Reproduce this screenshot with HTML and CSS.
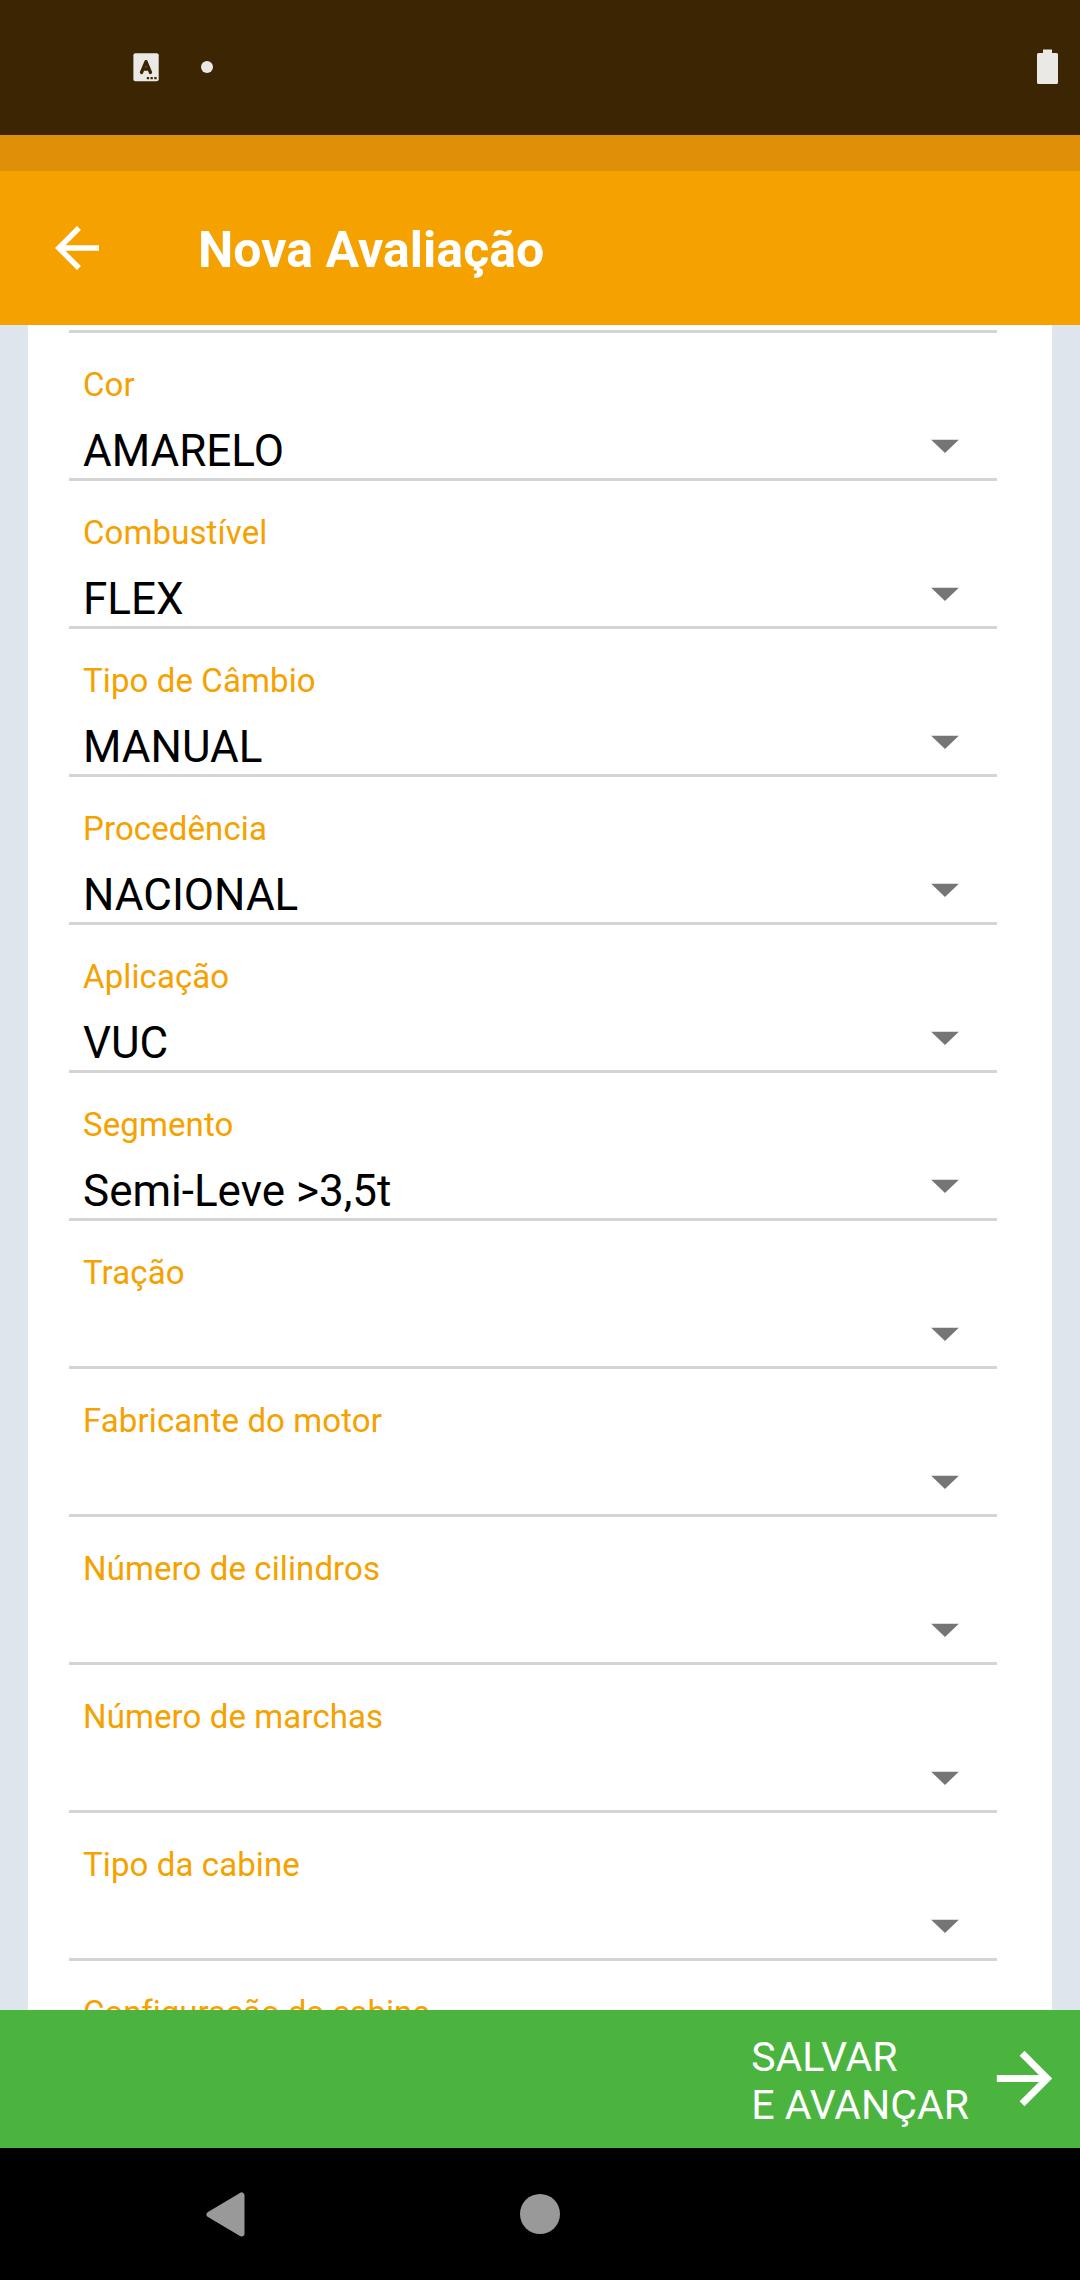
FILE: index.html
```html
<!DOCTYPE html>
<html lang="pt-BR">
<head>
<meta charset="utf-8">
<title>Nova Avaliação</title>
<link rel="stylesheet" href="styles.css">
</head>
<body>
<div class="screen">
  <div class="status">
    <svg class="status-app" viewBox="0 0 26 29"><rect x=".4" y=".3" width="25.3" height="28" rx="2" fill="#ebe9e5"/><path d="M8.500 19.500 13 8.600l4.500 10.900M10 16h6" fill="none" stroke="#3b2503" stroke-width="3.300" stroke-linecap="round" stroke-linejoin="round"/><path d="M13.800 24h2.300v2.200h-2.300zM17.500 24h2.300v2.200h-2.300zM21.300 24h2.300v2.200h-2.300z" fill="#3b2503"/></svg>
    <span class="status-dot"></span>
    <svg class="status-battery" viewBox="0 0 21 36"><path d="M6 .5h9V4h4.500Q21 4 21 5.500v28Q21 35 19.500 35h-18Q0 35 0 33.500v-28Q0 4 1.500 4H6z" fill="#ebe9e5"/></svg>
  </div>
  <div class="band"></div>
  <header class="toolbar">
    <svg class="back" viewBox="0 0 24 24"><path d="M20 11H7.830l5.590-5.590L12 4l-8 8 8 8 1.410-1.410L7.830 13H20z" fill="#fff"/></svg>
    <h1 class="title">Nova Avaliação</h1>
  </header>
  <main class="content">
    <div class="card">
      <div class="field"><div class="label">Cor</div><div class="value">AMARELO<svg class="caret" viewBox="0 0 28 14"><path d="M.2.7h27.600L14 14z"/></svg></div></div>
      <div class="field"><div class="label">Combustível</div><div class="value">FLEX<svg class="caret" viewBox="0 0 28 14"><path d="M.2.7h27.600L14 14z"/></svg></div></div>
      <div class="field"><div class="label">Tipo de Câmbio</div><div class="value">MANUAL<svg class="caret" viewBox="0 0 28 14"><path d="M.2.7h27.600L14 14z"/></svg></div></div>
      <div class="field"><div class="label">Procedência</div><div class="value">NACIONAL<svg class="caret" viewBox="0 0 28 14"><path d="M.2.7h27.600L14 14z"/></svg></div></div>
      <div class="field"><div class="label">Aplicação</div><div class="value">VUC<svg class="caret" viewBox="0 0 28 14"><path d="M.2.7h27.600L14 14z"/></svg></div></div>
      <div class="field"><div class="label">Segmento</div><div class="value">Semi-Leve &gt;3,5t<svg class="caret" viewBox="0 0 28 14"><path d="M.2.7h27.600L14 14z"/></svg></div></div>
      <div class="field"><div class="label">Tração</div><div class="value"><svg class="caret" viewBox="0 0 28 14"><path d="M.2.7h27.600L14 14z"/></svg></div></div>
      <div class="field"><div class="label">Fabricante do motor</div><div class="value"><svg class="caret" viewBox="0 0 28 14"><path d="M.2.7h27.600L14 14z"/></svg></div></div>
      <div class="field"><div class="label">Número de cilindros</div><div class="value"><svg class="caret" viewBox="0 0 28 14"><path d="M.2.7h27.600L14 14z"/></svg></div></div>
      <div class="field"><div class="label">Número de marchas</div><div class="value"><svg class="caret" viewBox="0 0 28 14"><path d="M.2.7h27.600L14 14z"/></svg></div></div>
      <div class="field"><div class="label">Tipo da cabine</div><div class="value"><svg class="caret" viewBox="0 0 28 14"><path d="M.2.7h27.600L14 14z"/></svg></div></div>
      <div class="field"><div class="label label-long">Configuração da cabine</div><div class="value"></div></div>
    </div>
  </main>
  <div class="save">
    <span class="save-text">SALVAR<br>E AVANÇAR</span>
    <svg class="next" viewBox="0 0 24 24"><path d="M12 4l-1.410 1.410L16.170 11H4v2h12.170l-5.580 5.590L12 20l8-8z" fill="#fff"/></svg>
  </div>
  <nav class="nav">
    <svg class="nav-back" viewBox="0 0 39 45"><path d="M3.500 22.500 35.500 3.500v38z" fill="#999" stroke="#999" stroke-width="6" stroke-linejoin="round"/></svg>
    <span class="nav-home"></span>
  </nav>
</div>
</body>
</html>
```
FILE: styles.css
```css
* { box-sizing: border-box; }
body { margin: 0; font-family: Roboto, sans-serif; }
svg { display: block; flex: none; }
.screen { width: 1080px; height: 2280px; display: flex; flex-direction: column; overflow: hidden; background: #000; }
.status { height: 135px; flex: none; background: #3b2503; display: flex; align-items: flex-start; padding: 0 22px 0 133px; }
.status-app { width: 26px; height: 29px; margin-top: 53px; }
.status-dot { width: 12px; height: 12px; border-radius: 50%; background: #ebe9e5; margin: 61px 0 0 42px; }
.status-battery { width: 21px; height: 36px; margin: 49px 0 0 auto; }
.band { height: 36px; flex: none; background: #df9008; }
.toolbar { height: 154px; flex: none; background: #f5a100; display: flex; align-items: center; padding-left: 44px; }
.back { width: 66px; height: 66px; }
.title { margin: 4px 0 0 88px; font-size: 50px; line-height: 58px; font-weight: 700; letter-spacing: .05px; color: #fff; white-space: nowrap; }
.content { height: 1685px; flex: none; overflow: hidden; background: #dee5ed; padding: 0 28px; }
.card { background: #fff; padding: 5px 55px 0 41px; }
.card::before { content: ""; display: block; height: 3px; background: #d4d4d4; }
.field { height: 148px; border-bottom: 3px solid #d4d4d4; padding: 30px 38px 0 14px; }
.label { font-size: 33px; line-height: 44px; letter-spacing: .1px; color: #f5a100; white-space: nowrap; }
.label-long { letter-spacing: -.05px; }
.value { margin-top: 18px; height: 52px; font-size: 44px; line-height: 52px; color: #000; display: flex; justify-content: space-between; white-space: nowrap; }
.caret { width: 28px; height: 14px; margin: 14px 0 0 auto; fill: #757575; }
.save { height: 138px; flex: none; background: #4ab43f; display: flex; justify-content: flex-end; align-items: center; padding-right: 14px; }
.save-text { font-size: 41px; line-height: 48px; color: #fff; white-space: nowrap; margin: 4px 14px 0 0; }
.next { width: 83px; height: 83px; margin-bottom: 2px; }
.nav { height: 132px; background: #000; display: flex; align-items: center; padding-left: 206px; }
.nav-back { width: 39px; height: 45px; }
.nav-home { width: 40px; height: 40px; border-radius: 50%; background: #999; margin-left: 275px; }
```
